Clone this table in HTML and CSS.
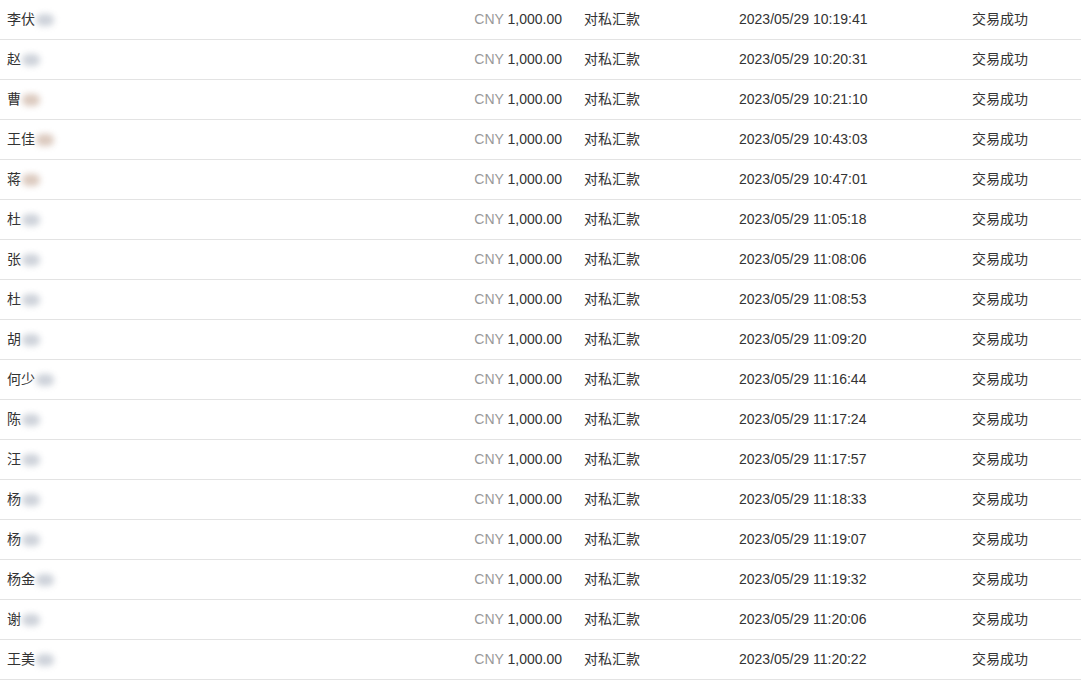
FILE: index.html
```html
<!DOCTYPE html>
<html lang="zh-CN">
<head>
<meta charset="utf-8">
<title>交易记录</title>
<link rel="stylesheet" href="styles.css">
</head>
<body>
<div class="table">
  <div class="row"><div class="c name">李伏<span class="blur"></span></div><div class="c amt"><span class="cur">CNY</span> 1,000.00</div><div class="c type">对私汇款</div><div class="c date">2023/05/29 10:19:41</div><div class="c status">交易成功</div></div>
  <div class="row"><div class="c name">赵<span class="blur"></span></div><div class="c amt"><span class="cur">CNY</span> 1,000.00</div><div class="c type">对私汇款</div><div class="c date">2023/05/29 10:20:31</div><div class="c status">交易成功</div></div>
  <div class="row"><div class="c name">曹<span class="blur warm"></span></div><div class="c amt"><span class="cur">CNY</span> 1,000.00</div><div class="c type">对私汇款</div><div class="c date">2023/05/29 10:21:10</div><div class="c status">交易成功</div></div>
  <div class="row"><div class="c name">王佳<span class="blur warm"></span></div><div class="c amt"><span class="cur">CNY</span> 1,000.00</div><div class="c type">对私汇款</div><div class="c date">2023/05/29 10:43:03</div><div class="c status">交易成功</div></div>
  <div class="row"><div class="c name">蒋<span class="blur warm"></span></div><div class="c amt"><span class="cur">CNY</span> 1,000.00</div><div class="c type">对私汇款</div><div class="c date">2023/05/29 10:47:01</div><div class="c status">交易成功</div></div>
  <div class="row"><div class="c name">杜<span class="blur"></span></div><div class="c amt"><span class="cur">CNY</span> 1,000.00</div><div class="c type">对私汇款</div><div class="c date">2023/05/29 11:05:18</div><div class="c status">交易成功</div></div>
  <div class="row"><div class="c name">张<span class="blur"></span></div><div class="c amt"><span class="cur">CNY</span> 1,000.00</div><div class="c type">对私汇款</div><div class="c date">2023/05/29 11:08:06</div><div class="c status">交易成功</div></div>
  <div class="row"><div class="c name">杜<span class="blur"></span></div><div class="c amt"><span class="cur">CNY</span> 1,000.00</div><div class="c type">对私汇款</div><div class="c date">2023/05/29 11:08:53</div><div class="c status">交易成功</div></div>
  <div class="row"><div class="c name">胡<span class="blur"></span></div><div class="c amt"><span class="cur">CNY</span> 1,000.00</div><div class="c type">对私汇款</div><div class="c date">2023/05/29 11:09:20</div><div class="c status">交易成功</div></div>
  <div class="row"><div class="c name">何少<span class="blur"></span></div><div class="c amt"><span class="cur">CNY</span> 1,000.00</div><div class="c type">对私汇款</div><div class="c date">2023/05/29 11:16:44</div><div class="c status">交易成功</div></div>
  <div class="row"><div class="c name">陈<span class="blur"></span></div><div class="c amt"><span class="cur">CNY</span> 1,000.00</div><div class="c type">对私汇款</div><div class="c date">2023/05/29 11:17:24</div><div class="c status">交易成功</div></div>
  <div class="row"><div class="c name">汪<span class="blur"></span></div><div class="c amt"><span class="cur">CNY</span> 1,000.00</div><div class="c type">对私汇款</div><div class="c date">2023/05/29 11:17:57</div><div class="c status">交易成功</div></div>
  <div class="row"><div class="c name">杨<span class="blur"></span></div><div class="c amt"><span class="cur">CNY</span> 1,000.00</div><div class="c type">对私汇款</div><div class="c date">2023/05/29 11:18:33</div><div class="c status">交易成功</div></div>
  <div class="row"><div class="c name">杨<span class="blur"></span></div><div class="c amt"><span class="cur">CNY</span> 1,000.00</div><div class="c type">对私汇款</div><div class="c date">2023/05/29 11:19:07</div><div class="c status">交易成功</div></div>
  <div class="row"><div class="c name">杨金<span class="blur"></span></div><div class="c amt"><span class="cur">CNY</span> 1,000.00</div><div class="c type">对私汇款</div><div class="c date">2023/05/29 11:19:32</div><div class="c status">交易成功</div></div>
  <div class="row"><div class="c name">谢<span class="blur"></span></div><div class="c amt"><span class="cur">CNY</span> 1,000.00</div><div class="c type">对私汇款</div><div class="c date">2023/05/29 11:20:06</div><div class="c status">交易成功</div></div>
  <div class="row"><div class="c name">王美<span class="blur"></span></div><div class="c amt"><span class="cur">CNY</span> 1,000.00</div><div class="c type">对私汇款</div><div class="c date">2023/05/29 11:20:22</div><div class="c status">交易成功</div></div>
</div>
</body>
</html>
```

FILE: styles.css
```css
html, body {
  margin: 0;
  padding: 0;
  background: #ffffff;
}

body {
  font-family: "Liberation Sans", Arial, "Noto Sans CJK SC", sans-serif;
  font-size: 14px;
  color: #333333;
}

.table {
  width: 1081px;
}

.row {
  display: grid;
  grid-template-columns: 465px 105px 161px 233px 1fr;
  height: 39px;
  line-height: 39px;
  border-bottom: 1px solid #e3e3e3;
  white-space: nowrap;
}

.c {
  overflow: hidden;
}

.name {
  padding-left: 7px;
  display: flex;
  align-items: center;
}

.blur {
  display: inline-block;
  width: 18px;
  height: 12px;
  margin-left: 1px;
  border-radius: 6px;
  background: #b3bac6;
  filter: blur(3px);
  opacity: 0.65;
}

.blur.warm {
  background: #c8ad9c;
}

.amt {
  text-align: right;
  padding-right: 8px;
}

.cur {
  color: #999999;
}

.type {
  padding-left: 14px;
}

.date {
  padding-left: 8px;
}

.status {
  padding-left: 8px;
}
```
